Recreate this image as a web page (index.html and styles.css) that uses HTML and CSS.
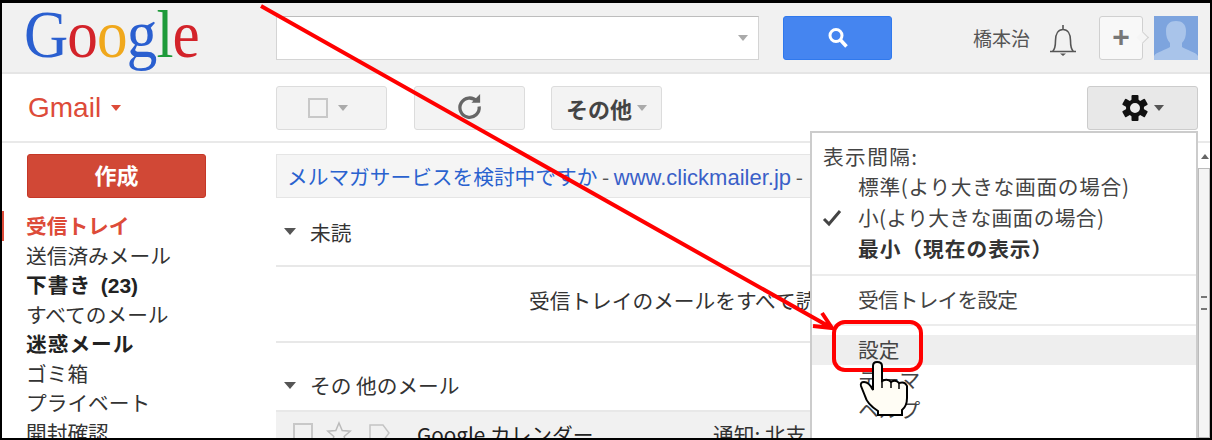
FILE: index.html
```html
<!DOCTYPE html>
<html lang="ja">
<head>
    <meta charset="UTF-8">
    <title>Gmail 設定</title>
    <link rel="stylesheet" href="styles.css">
</head>
<body>
<div class="frame">
    <header class="top">
        <div class="logo-box">
            <div class="logo"><span class="b">G</span><span class="r">o</span><span class="y">o</span><span class="b">g</span><span class="g">l</span><span class="r">e</span></div>
        </div>
        <div class="search"><i class="caret"></i></div>
        <div class="search-btn">
            <svg width="24" height="24" viewBox="0 0 24 24"><circle cx="10" cy="9.5" r="6" fill="none" stroke="#fff" stroke-width="3"/><path d="M14.5 14l6 6.5" stroke="#fff" stroke-width="3.6"/></svg>
        </div>
        <div class="user">橋本治</div>
        <svg class="bell" width="28" height="34" viewBox="0 0 28 34"><path d="M1 28.500h26M3.500 28.500c2.500-2 3-5 3-11 0-7 3-11 7.500-11s7.500 4 7.500 11c0 6 .5 9 3 11M14 6.500V2" fill="none" stroke="#555" stroke-width="1.600"/><path d="M11 30.500h6l-3 2.500z" fill="#555"/></svg>
        <div class="plus">+</div>
        <div class="avatar">
            <svg width="44" height="44" viewBox="0 0 44 44"><path d="M0 44v-4c2-4 12-6 16-9v-4c-3-3-4-7-4-12 0-7 4-10 10-10s10 3 10 10c0 5-1 9-4 12v4c4 3 14 5 16 9v4z" fill="#a9c4ea"/></svg>
        </div>
    </header>

    <div class="toolbar">
        <div class="brand">Gmail <i class="caret red"></i></div>
        <div class="btn btn-check"><span class="box"></span><i class="caret"></i></div>
        <div class="btn btn-refresh">
            <svg width="27" height="27" viewBox="0 0 28 28"><path d="M21.500 8.500A10 10 0 1 0 24 14" fill="none" stroke="#666" stroke-width="3.400"/><path d="M16 10h9V1z" fill="#666"/></svg>
        </div>
        <div class="btn btn-more">その他<i class="caret"></i></div>
        <div class="btn btn-gear">
            <svg width="28" height="28" viewBox="0 0 28 28">
                <g fill="#111">
                    <rect x="10.500" y="1" width="7" height="26" rx="1"/>
                    <rect x="10.500" y="1" width="7" height="26" rx="1" transform="rotate(60 14 14)"/>
                    <rect x="10.500" y="1" width="7" height="26" rx="1" transform="rotate(120 14 14)"/>
                </g>
                <circle cx="14" cy="14" r="7" fill="#ececec" stroke="#111" stroke-width="4"/>
            </svg>
            <i class="caret dark"></i>
        </div>
    </div>

    <div class="content">
        <aside class="side">
            <div class="compose">作成</div>
            <ul class="nav">
                <li class="active">受信トレイ</li>
                <li>送信済みメール</li>
                <li class="bold">下書き <span class="count">(23)</span></li>
                <li>すべてのメール</li>
                <li class="bold">迷惑メール</li>
                <li>ゴミ箱</li>
                <li>プライベート</li>
                <li>開封確認</li>
            </ul>
        </aside>

        <main class="main">
            <div class="ad"><span class="ad-link">メルマガサービスを検討中ですか</span> - <span class="ad-url">www.clickmailer.jp</span> -</div>
            <div class="section first"><i class="tri"></i>未読</div>
            <div class="empty"><div class="empty-text">受信トレイのメールをすべて読みました</div></div>
            <div class="section other"><i class="tri"></i>その 他のメール</div>
            <div class="row">
                <span class="box"></span>
                <svg class="star" width="26" height="26" viewBox="0 0 26 26"><path d="M13 2l3.200 7.500 8 .7-6 5.300 1.800 8L13 19.300 6 23.500l1.800-8-6-5.300 8-.7z" fill="none" stroke="#bbb" stroke-width="1.500"/></svg>
                <svg class="tag" width="24" height="20" viewBox="0 0 24 20"><path d="M2 2h13l6 8-6 8H2z" fill="none" stroke="#c4c4c4" stroke-width="1.500"/></svg>
                <span class="sender">Google カレンダー</span>
                <span class="subject">通知: 北支</span>
            </div>
        </main>

        <div class="scroll-col">
            <i class="scroll-up"></i>
            <div class="scrollbar"><span class="grip"></span></div>
        </div>
    </div>

    <div class="menu">
        <div class="item head">表示間隔:</div>
        <div class="item sub roomy">標準(より大きな画面の場合)</div>
        <div class="item sub checked">
            <svg class="check" width="20" height="18" viewBox="0 0 20 18"><path d="M2 10l5 5L18 2" fill="none" stroke="#444" stroke-width="3"/></svg>
            小(より大きな画面の場合)
        </div>
        <div class="item sub current">最小（現在の表示）</div>
        <div class="sep"></div>
        <div class="item sub tight">受信トレイを設定</div>
        <div class="sep"></div>
        <div class="item sub hover">設定</div>
        <div class="item sub">テーマ</div>
        <div class="item sub">ヘルプ</div>
    </div>

    <div class="callout"></div>
    <svg class="arrow" width="1212" height="440" viewBox="0 0 1212 440">
        <path d="M261 6L830 327M813 326l19 2-10-15" fill="none" stroke="#f00" stroke-width="4"/>
    </svg>
    <svg class="hand" width="60" height="62" viewBox="0 0 60 62">
        <path d="M18 30V8q0-4 4-4 5 0 5 4v15q6-3 9 1 5-3 8 1 6-2 8 3v12q0 8-5 12v5H23v-4Q12 46 10 38L6 28q-1-4 3-4 5 0 9 8z" fill="#fffdf5" stroke="#000" stroke-width="2"/>
        <path d="M27 23v7M36 24v6M44 25v6" stroke="#000" stroke-width="1.500"/>
    </svg>
</div>
</body>
</html>
```

FILE: styles.css
```css
html, body { margin: 0; padding: 0; }
body { width: 1212px; height: 440px; overflow: hidden; background: #fff; font-family: "Noto Sans CJK JP", "Liberation Sans", sans-serif; font-size: 20.7px; color: #333; }
.frame { position: relative; box-sizing: border-box; width: 1212px; height: 440px; overflow: hidden; border: 2px solid #000; border-top-width: 3px; background: #fff; }

/* top bar */
.top { display: flex; align-items: center; height: 69px; background: #f1f1f1; border-bottom: 2px solid #e5e5e5; box-sizing: content-box; }
.logo-box { width: 274px; height: 69px; flex: none; }
.logo { font-family: "Liberation Serif", serif; font-size: 68px; line-height: 76px; margin: -7px 0 0 22px; transform: scaleX(.9); transform-origin: left top; letter-spacing: -1px; white-space: nowrap; }
.logo .b { color: #2a5fd0; }
.logo .r { color: #d3232a; }
.logo .y { color: #f0a81c; }
.logo .g { color: #1e9a3a; }
.search { display: flex; align-items: center; justify-content: flex-end; width: 483px; height: 44px; box-sizing: border-box; background: #fff; border: 1px solid #d4d4d4; border-top-color: #bdbdbd; padding-right: 10px; }
.search-btn { display: flex; align-items: center; justify-content: center; width: 109px; height: 44px; margin-left: 24px; background: #4585f0; border: 1px solid #3079ed; border-radius: 3px; box-sizing: border-box; }
.user { margin-left: 81px; width: 76px; font-size: 19px; color: #555; }
.bell { margin-top: 4px; }
.plus { position: relative; margin-left: 22px; width: 44px; height: 44px; box-sizing: border-box; border: 1px solid #d0d0d0; border-radius: 3px; background: #f8f8f8; color: #777; font: 700 30px/40px "Liberation Sans", sans-serif; text-align: center; }
.plus::after { content: ""; position: absolute; right: -5px; top: 16px; width: 8px; height: 8px; background: #f5f5f5; border-top: 1px solid #d0d0d0; border-right: 1px solid #d0d0d0; transform: rotate(45deg); }
.avatar { margin-left: 11px; width: 44px; height: 44px; background: #7da4de; overflow: hidden; }
.avatar svg { display: block; }

/* carets */
.caret { display: inline-block; width: 0; height: 0; border: 5px solid transparent; border-top: 6px solid #aaa; border-bottom: 0; }
.caret.red { border-top-color: #dd4b39; }
.caret.dark { border-top-color: #555; }

/* toolbar */
.toolbar { display: flex; align-items: center; height: 67px; border-bottom: 2px solid #e9e9e9; }
.brand { width: 248px; margin-left: 26px; flex: none; font: 28px "Liberation Sans", sans-serif; color: #dd4b39; }
.brand .caret { margin-left: 2px; vertical-align: 6px; }
.btn { display: flex; align-items: center; justify-content: center; width: 111px; height: 44px; box-sizing: border-box; border: 1px solid #dcdcdc; border-radius: 3px; background: #f3f3f3; }
.box { display: inline-block; width: 20px; height: 20px; box-sizing: border-box; border: 2px solid #c8c8c8; }
.btn-check { gap: 10px; padding-right: 8px; }
.btn-refresh { margin-left: 27px; padding-bottom: 3px; }
.btn-more { margin-left: 26px; font-size: 22px; font-weight: 700; color: #444; gap: 5px; }
.btn-gear { margin-left: 425px; gap: 5px; background: #e8e8e8; border-color: #ccc; }

/* body */
.content { display: flex; height: 295px; }
.side { width: 274px; flex: none; padding-top: 11px; }
.compose { width: 179px; height: 44px; margin-left: 25px; background: #d14836; border: 1px solid #c53727; border-radius: 3px; box-sizing: border-box; color: #fff; font-weight: 700; font-size: 22px; line-height: 39px; text-align: center; }
.nav { list-style: none; margin: 13px 0 0; padding: 0; }
.nav li { height: 29.5px; line-height: 29.5px; padding-left: 24px; white-space: nowrap; }
.nav .active { color: #dd4b39; font-weight: 700; border-left: 2px solid #dd4b39; padding-left: 22px; }
.nav .bold { font-weight: 700; color: #222; letter-spacing: 1px; }
.count { font-family: "Liberation Sans", sans-serif; font-size: 21px; letter-spacing: 0; margin-left: 4px; }

.main { width: 922px; flex: none; padding-top: 11px; }
.ad { height: 44px; box-sizing: border-box; padding-left: 10px; line-height: 42px; background: #f5f5f5; border: 1px solid #e5e5e5; white-space: nowrap; color: #555; }
.ad-link { color: #2a62cf; }
.ad-url { color: #3a5fc8; font-family: "Liberation Sans", sans-serif; font-size: 22px; }
.section { display: flex; align-items: center; height: 67px; }
.section.first { border-bottom: 2px solid #e8e8e8; }
.section.other { height: 50px; padding-top: 17px; }
.tri { width: 0; height: 0; margin: 0 14px 0 8px; border: 6px solid transparent; border-top: 7px solid #555; border-bottom: 0; }
.empty { height: 74px; padding-left: 253px; border-bottom: 2px solid #e8e8e8; }
.empty-text { width: 282px; line-height: 66px; overflow: hidden; white-space: nowrap; }
.row { display: flex; align-items: flex-start; gap: 13px; height: 40px; padding: 11px 0 0 17px; background: #f1f1f1; border-top: 2px solid #e8e8e8; white-space: nowrap; overflow: hidden; }
.row svg, .row .box { flex: none; }
.row .star { margin-top: -2px; }
.row .tag { margin-left: 3px; }
.sender { width: 283px; margin-left: 12px; line-height: 22px; color: #222; }
.subject { line-height: 22px; }
.scroll-col { flex: 1; }
.scroll-up { display: block; width: 0; height: 0; margin: 11px 0 0 3px; border: 4px solid transparent; border-bottom: 5px solid #666; border-top: 0; }
.scrollbar { display: flex; align-items: center; justify-content: center; height: 270px; margin-top: 9px; box-sizing: border-box; border: 1px solid #bbb; background: #f4f4f4; }
.grip { width: 6px; height: 10px; border-top: 2px solid #777; border-bottom: 2px solid #777; }

/* settings dropdown */
.menu { position: absolute; left: 808px; top: 128px; width: 388px; height: 320px; box-sizing: border-box; padding-top: 9px; background: #fff; border: 2px solid #ccc; }
.item { position: relative; height: 30px; line-height: 29px; white-space: nowrap; color: #444; }
.head { padding-left: 11px; letter-spacing: 1.400px; }
.sub { padding-left: 46px; }
.roomy { height: 31px; letter-spacing: .7px; }
.checked { height: 31px; letter-spacing: .4px; }
.tight { letter-spacing: -.8px; }
.current { height: 32px; font-weight: 700; color: #333; letter-spacing: 1px; }
.check { position: absolute; left: 10px; top: 6px; }
.sep { height: 2px; margin: 8px 0 9px; background: #ececec; }
.tight + .sep { margin-top: 9px; }
.hover { background: #eee; }

/* annotations laid over the screenshot */
.callout { position: absolute; left: 830px; top: 317px; width: 91px; height: 52px; box-sizing: border-box; border: 4px solid #f00; border-radius: 13px; }
.arrow { position: absolute; left: -2px; top: -3px; }
.hand { position: absolute; left: 853px; top: 355px; }
```
